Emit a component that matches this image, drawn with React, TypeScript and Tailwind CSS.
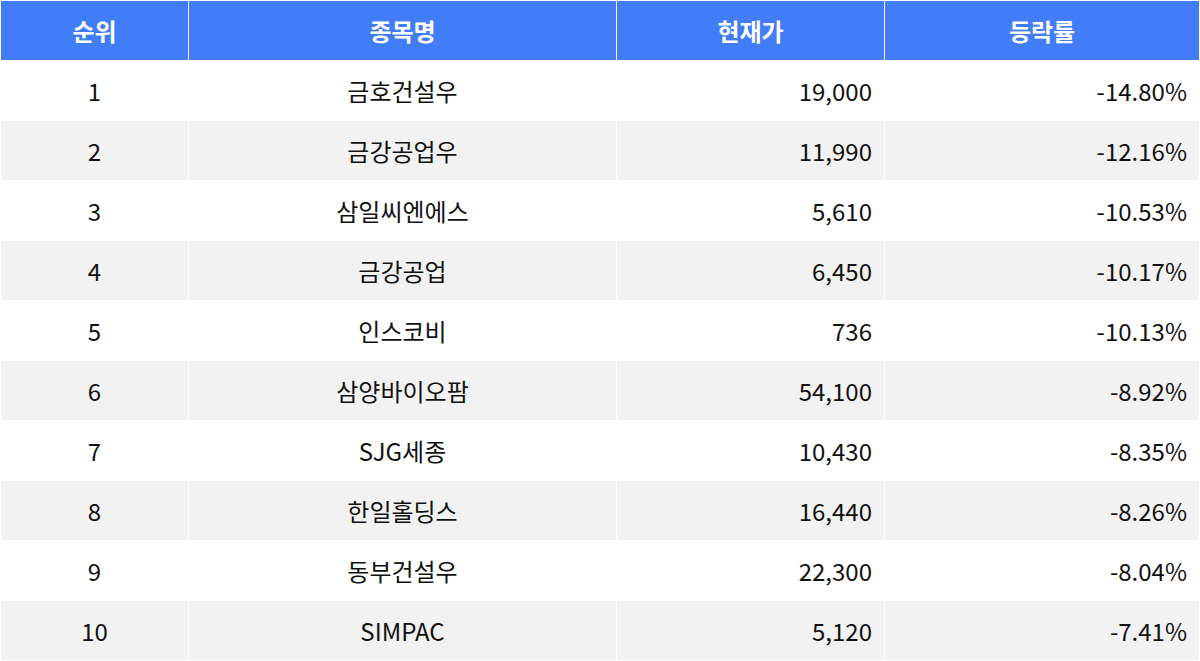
const rows = [
  ["1", "금호건설우", "19,000", "-14.80%"],
  ["2", "금강공업우", "11,990", "-12.16%"],
  ["3", "삼일씨엔에스", "5,610", "-10.53%"],
  ["4", "금강공업", "6,450", "-10.17%"],
  ["5", "인스코비", "736", "-10.13%"],
  ["6", "삼양바이오팜", "54,100", "-8.92%"],
  ["7", "SJG세종", "10,430", "-8.35%"],
  ["8", "한일홀딩스", "16,440", "-8.26%"],
  ["9", "동부건설우", "22,300", "-8.04%"],
  ["10", "SIMPAC", "5,120", "-7.41%"],
];

export default function App() {
  return (
    <div
      className="w-[1200px] h-[661px] bg-white p-px grid grid-cols-[187px_427px_267px_314px] auto-rows-[59px] gap-px text-[24px] text-[#111]"
      style={{ fontFamily: '"Noto Sans CJK KR", "Noto Sans", sans-serif' }}
    >
      {["순위", "종목명", "현재가", "등락률"].map((h) => (
        <div key={h} className="bg-[#407df7] text-white font-bold flex items-center justify-center">
          {h}
        </div>
      ))}
      {rows.map((r, i) => {
        const bg = i % 2 === 0 ? "bg-white" : "bg-[#f2f2f2]";
        return [
          <div key={`${i}a`} className={`${bg} flex items-center justify-center`}>{r[0]}</div>,
          <div key={`${i}b`} className={`${bg} flex items-center justify-center`}>{r[1]}</div>,
          <div key={`${i}c`} className={`${bg} flex items-center justify-end pr-3`}>{r[2]}</div>,
          <div key={`${i}d`} className={`${bg} flex items-center justify-end pr-3`}>{r[3]}</div>,
        ];
      })}
    </div>
  );
}
